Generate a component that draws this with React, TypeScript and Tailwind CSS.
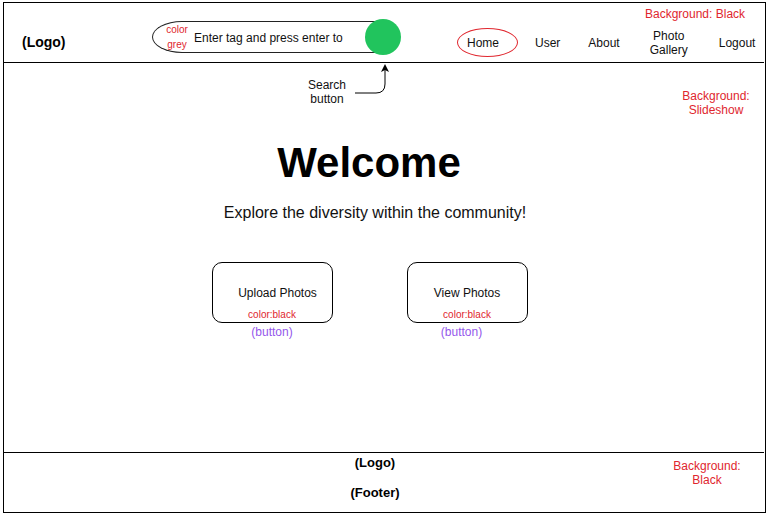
const red = 'text-[#e0262e]';

function NavLink({ children }: { children: React.ReactNode }) {
  return <span className="block text-[12px] leading-[14px] text-[#111]">{children}</span>;
}

function ActionBox({ label, className }: { label: string; className?: string }) {
  return (
    <div className="flex flex-col items-center">
      <div className="w-[121px] h-[61px] border border-black rounded-[10px] flex flex-col items-center pt-[22px]">
        <span className={`text-[12px] leading-[16px] text-[#111] ${className ?? ''}`}>{label}</span>
        <span className={`mt-[8px] text-[10px] leading-[12px] ${red}`}>color:black</span>
      </div>
    </div>
  );
}

export default function App() {
  return (
    <div className="w-[771px] h-[516px] bg-white font-['Liberation_Sans',Arial,sans-serif] text-black overflow-hidden">
      <div className="ml-[3px] mt-[2px] w-[763px] h-[511px] border border-black flex flex-col">
        {/* header */}
        <header className="relative h-[60px] shrink-0 border-b border-black mr-[1px] flex items-start">
          <div className="w-[148px] pl-[18px] mt-[31px] text-[14px] leading-[17px] font-bold">(Logo)</div>

          <div className="mt-[16px] flex items-center">
            <div className="w-[226px] h-[32px] border-y border-l border-[#222] rounded-l-[30px_16px] flex items-center pl-[13px]">
              <div className={`w-[22px] flex flex-col items-center text-[10px] leading-[15px] ${red}`}>
                <span>color</span>
                <span>grey</span>
              </div>
              <span className="ml-[6px] mt-[1px] text-[12px] leading-[14px] text-[#111] whitespace-nowrap">
                Enter tag and press enter to
              </span>
            </div>
            <div className="w-[36px] h-[36px] -ml-[13px] rounded-full bg-[#21c45d]" />
          </div>

          <nav className="ml-[56px] mt-[25px] flex items-center leading-[14px]">
            <div className="w-[61px] h-[29px] border border-[#e0262e] rounded-[50%] flex items-center justify-center pr-[9px]">
              <NavLink>Home</NavLink>
            </div>
            <div className="ml-[17px]">
              <NavLink>User</NavLink>
            </div>
            <div className="ml-[28px]">
              <NavLink>About</NavLink>
            </div>
            <div className="ml-[30px] text-center">
              <NavLink>
                Photo
                <br />
                Gallery
              </NavLink>
            </div>
            <div className="ml-[31px]">
              <NavLink>Logout</NavLink>
            </div>
          </nav>

          <span className={`absolute left-[641px] top-[4px] text-[12px] leading-[14px] ${red}`}>Background: Black</span>
        </header>

        {/* main / slideshow */}
        <main className="relative flex-1 flex flex-col items-center pr-[28px]">
          <h1 className="mt-[76px] mr-[3px] text-[42px] leading-[48px] font-bold">Welcome</h1>
          <p className="mt-[16px] ml-[9px] text-[16px] leading-[20px] text-[#111]">
            Explore the diversity within the community!
          </p>

          <div className="mt-[39px] mr-[2px] flex gap-[74px]">
            <div className="flex flex-col items-center">
              <ActionBox label="Upload Photos" className="pl-[11px]" />
              <span className="mt-[2px] text-[12px] leading-[14px] text-[#9457eb]">(button)</span>
            </div>
            <div className="flex flex-col items-center">
              <ActionBox label="View Photos" />
              <span className="mt-[2px] mr-[11px] text-[12px] leading-[14px] text-[#9457eb]">(button)</span>
            </div>
          </div>

          {/* callout: search button */}
          <div className="absolute left-[303px] top-[15px] w-[40px] text-center text-[12px] leading-[14px] text-[#111]">
            Search
            <br />
            button
          </div>
          <svg className="absolute left-[346px] top-0" width="45" height="40" viewBox="0 0 45 40">
            <path d="M5 30 H26 Q35 30 35 21 V6" fill="none" stroke="#000" strokeWidth="1" />
            <polygon points="35,1 31,9 35,7 39,9" fill="#000" />
          </svg>

          <div className={`absolute left-[676px] top-[26px] w-[72px] text-center text-[12px] leading-[14px] ${red}`}>
            Background:
            <br />
            Slideshow
          </div>
        </main>

        {/* footer */}
        <footer className="relative h-[60px] shrink-0 border-t border-black mr-[1px] flex flex-col items-center pr-[18px] pt-[2px]">
          <span className="text-[13px] leading-[16px] font-bold">(Logo)</span>
          <span className="mt-[14px] text-[13px] leading-[16px] font-bold">(Footer)</span>
          <div className={`absolute left-[666px] top-[6px] w-[74px] text-center text-[12px] leading-[14px] ${red}`}>
            Background:
            <br />
            Black
          </div>
        </footer>
      </div>
    </div>
  );
}
